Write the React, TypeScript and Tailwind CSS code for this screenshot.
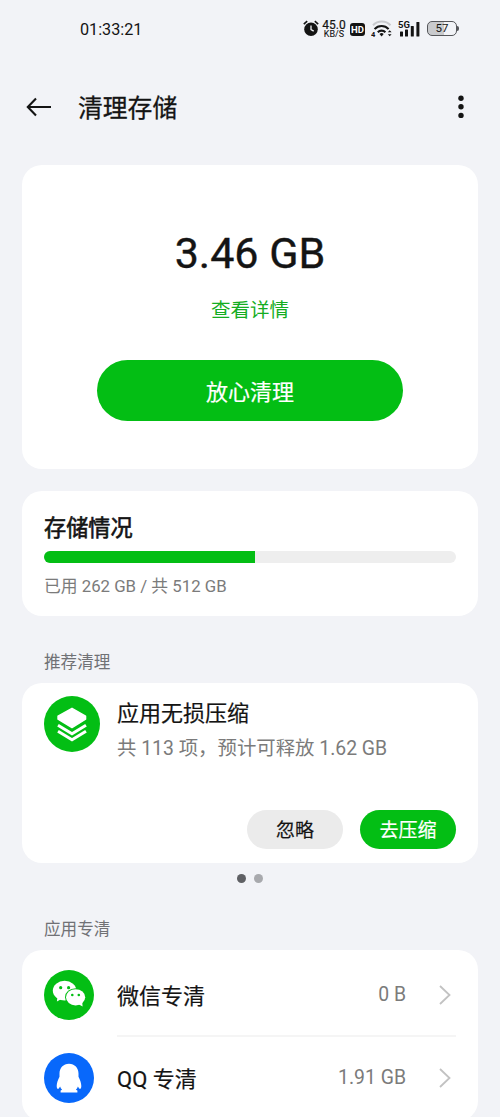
import type { ReactNode } from 'react';

const apps = [
  { id: 'wechat', name: '微信专清', size: '0 B', icon: <WechatIcon /> },
  { id: 'qq', name: 'QQ 专清', size: '1.91 GB', icon: <QQIcon /> },
];

const storage = { used: 262, total: 512 };

export default function App() {
  return (
    <div className="flex h-[1117px] w-[500px] flex-col overflow-hidden bg-[#f2f3f7] font-['Roboto','Noto_Sans_CJK_SC',sans-serif] text-[#141414]">
      <StatusBar />
      <header className="flex h-[111px] shrink-0 items-center pr-[36px] pb-[5px] pl-[26px]">
        <svg width="26" height="20" viewBox="0 0 26 20" fill="none" stroke="currentColor" strokeWidth="2.1">
          <path d="M10 1.5 1.8 10l8.2 8.5M1.8 10H25" />
        </svg>
        <h1 className="ml-[26px] pt-[4px] text-[24.8px] leading-9 [-webkit-text-stroke:0.3px]">清理存储</h1>
        <svg className="ml-auto" width="6" height="24" viewBox="0 0 6 24" fill="currentColor">
          <circle cx="3" cy="3.2" r="2.7" />
          <circle cx="3" cy="11.8" r="2.7" />
          <circle cx="3" cy="20.4" r="2.7" />
        </svg>
      </header>

      <main className="flex flex-col px-[22px]">
        <section className="flex h-[304px] flex-col items-center rounded-[20px] bg-white pt-[63px]">
          <p className="text-[43px] leading-[50px] [-webkit-text-stroke:0.4px]">3.46 GB</p>
          <a className="mt-[19px] text-[19.5px] leading-7 text-[#14ad22]">查看详情</a>
          <button className="mt-[35px] h-[61px] w-[306px] rounded-full bg-[#03be14] pt-[3px] text-[22px] text-white [-webkit-text-stroke:0.2px]">
            放心清理
          </button>
        </section>

        <section className="mt-[22px] h-[125px] rounded-[20px] bg-white px-[22px] pt-[21px]">
          <h2 className="text-[22.2px] leading-8 [-webkit-text-stroke:0.6px]">存储情况</h2>
          <div className="mt-[7px] h-[12px] overflow-hidden rounded-full bg-[#eeeeee]">
            <div className="h-full bg-[#03be14]" style={{ width: `${(storage.used / storage.total) * 100}%` }} />
          </div>
          <p className="mt-[11px] text-[16.8px] leading-6 text-[#7b7b7b]">
            已用 {storage.used} GB / 共 {storage.total} GB
          </p>
        </section>

        <SectionTitle>推荐清理</SectionTitle>
        <section className="flex h-[180px] flex-col rounded-[20px] bg-white px-[22px] pt-[13px] pb-[14px]">
          <div className="flex">
            <LayersIcon />
            <div className="ml-[17px]">
              <h3 className="pt-px text-[22px] leading-[34px] [-webkit-text-stroke:0.2px]">应用无损压缩</h3>
              <p className="mt-[3px] text-[19.4px] leading-[30px] whitespace-nowrap text-[#7b7b7b]">
                共 113 项，预计可释放 1.62 GB
              </p>
            </div>
          </div>
          <div className="mt-auto flex justify-end gap-[17px]">
            <button className="h-[39px] w-[96px] rounded-full bg-[#ebebeb] pt-[4px] text-[19px] [-webkit-text-stroke:0.2px]">忽略</button>
            <button className="h-[39px] w-[96px] rounded-full bg-[#03be14] pt-[4px] text-[19px] text-white [-webkit-text-stroke:0.2px]">
              去压缩
            </button>
          </div>
        </section>
        <div className="mt-[11px] flex justify-center gap-[8px]">
          <span className="size-[9px] rounded-full bg-[#5f6064]" />
          <span className="size-[9px] rounded-full bg-[#a8a9ad]" />
        </div>

        <SectionTitle>应用专清</SectionTitle>
        <section className="h-[171px] rounded-[20px] bg-white px-[22px] pt-[2px]">
          {apps.map((app, i) => (
            <div key={app.id} className={i === 0 ? 'flex h-[85px] items-center' : 'flex h-[81px] items-center'}>
              {app.icon}
              <div
                className={
                  i === 0
                    ? 'ml-[23px] flex h-full flex-1 items-center border-b-2 border-[#f5f5f5] pt-[2px]'
                    : 'ml-[23px] flex h-full flex-1 items-center'
                }
              >
                <span className="pt-[3px] text-[22px] [-webkit-text-stroke:0.2px]">{app.name}</span>
                <span className="ml-auto pt-px text-[19.4px] text-[#7b7b7b]">{app.size}</span>
                <svg className="mr-[5px] ml-[33px]" width="12" height="20" viewBox="0 0 12 20" fill="none" stroke="#c2c2c2" strokeWidth="1.8">
                  <path d="m1 1 9.5 9L1 19" />
                </svg>
              </div>
            </div>
          ))}
        </section>
      </main>
    </div>
  );
}

function SectionTitle({ children }: { children: ReactNode }) {
  return <h4 className="pt-[35px] pb-[8px] pl-[22px] text-[16.6px] leading-6 text-[#707175]">{children}</h4>;
}

function StatusBar() {
  return (
    <div className="flex h-[54px] shrink-0 items-center pt-[4px] pr-[41px] pl-[80px]">
      <span className="pt-[2px] text-[16.2px]">01:33:21</span>
      <div className="ml-auto flex items-center">
        {/* alarm */}
        <svg className="-mt-px" width="16" height="17" viewBox="0 0 16 17">
          <circle cx="8" cy="9.3" r="6.8" fill="#141414" />
          <path d="M.8 4.2 4.2 1.2M15.2 4.2l-3.4-3" stroke="#141414" strokeWidth="1.6" />
          <path d="M8 5.6v4l2.7 1.5" stroke="#f2f3f7" strokeWidth="1.3" fill="none" />
        </svg>
        <div className="ml-[3px] flex w-[24px] flex-col items-center">
          <span className="text-[12px] leading-[10px] [-webkit-text-stroke:0.2px]">45.0</span>
          <span className="text-[9px] leading-[8px] [-webkit-text-stroke:0.1px]">KB/S</span>
        </div>
        <span className="ml-[4px] flex h-[13px] w-[15px] items-center justify-center rounded-[3px] bg-[#141414] pt-px text-[9.5px] leading-none font-bold text-white">
          HD
        </span>
        {/* wifi with generation mark and traffic arrows */}
        <svg className="ml-[6px]" width="22" height="18" viewBox="0 0 22 18" fill="none">
          <path d="M2 5.2a12 12 0 0 1 17.5 0" stroke="#c8c9cd" strokeWidth="2" />
          <path d="M3.6 9.1a9.5 9.5 0 0 1 14 0M6.8 12.2a5.3 5.3 0 0 1 7.6 0" stroke="#141414" strokeWidth="2.1" />
          <path d="m10.6 16.5-2.1-2.400a3 3 0 0 1 4.200 0z" fill="#141414" />
          <text x="0" y="16.500" fontSize="7.5" fontWeight="700" fill="#141414">4</text>
          <path d="m16.8 12.3 1.900-2 1.900 2zM16.800 14.200l1.900 2 1.900-2z" fill="#141414" />
        </svg>
        {/* signal */}
        <svg className="ml-[5px]" width="23" height="18" viewBox="0 0 23 18" fill="#141414">
          <text x="0" y="7.800" fontSize="9.500" fontWeight="700">5G</text>
          <rect x="2" y="11.5" width="3" height="5" rx=".6" />
          <rect x="7" y="9.5" width="3" height="7" rx=".6" />
          <rect x="12.800" y="6" width="3" height="10.5" rx=".6" />
          <rect x="18.400" y="2" width="3" height="14.5" rx=".6" />
        </svg>
        <div className="-mt-px ml-[6px] flex items-center">
          <div className="flex h-[15px] w-[30px] items-center justify-center rounded-[5px] border-[1.5px] border-[#55565a] bg-linear-to-r from-[#c9cacd] from-57% to-[#f2f3f7] to-57% pt-px text-[11.5px] leading-none">
            57
          </div>
          <span className="h-[5px] w-[2px] rounded-r-full bg-[#55565a]" />
        </div>
      </div>
    </div>
  );
}

function LayersIcon() {
  return (
    <svg className="shrink-0" width="56" height="56" viewBox="0 0 56 56">
      <circle cx="28" cy="28" r="28" fill="#03be14" />
      <path d="M28 12.3 41.6 20.2v3L28 31.6 14 23.2v-3z" fill="#fff" stroke="#fff" strokeWidth="1.4" strokeLinejoin="round" />
      <path d="M14 29.3 28 37.8l14-8.5M14 35.2l14 8.5 14-8.5" fill="none" stroke="#fff" strokeWidth="3" />
    </svg>
  );
}

function WechatIcon() {
  return (
    <svg className="shrink-0" width="50" height="50" viewBox="0 0 50 50">
      <circle cx="25" cy="25" r="25" fill="#03be14" />
      <ellipse cx="20.6" cy="20.6" rx="11.8" ry="9.8" fill="#fff" />
      <path d="m13.5 26.5-.6 5 5.500-3z" fill="#fff" />
      <ellipse cx="31.6" cy="27.3" rx="10.6" ry="9.1" fill="#03be14" />
      <ellipse cx="31.6" cy="27.3" rx="9.6" ry="8.1" fill="#fff" />
      <path d="m38.2 32 .4 4.4-5-2.6z" fill="#fff" />
      <g fill="#03be14">
        <circle cx="16.7" cy="17.7" r="1.6" />
        <circle cx="24.6" cy="17.7" r="1.6" />
        <circle cx="28.3" cy="25" r="1.3" />
        <circle cx="34.8" cy="25" r="1.3" />
      </g>
    </svg>
  );
}

function QQIcon() {
  return (
    <svg className="shrink-0" width="50" height="50" viewBox="0 0 50 50">
      <circle cx="25" cy="25" r="25" fill="#0868fb" />
      <path
        d="M25 10.8c-5.7 0-9.5 4.4-9.5 9.7v3.2c-1.4 2.7-2.9 6.3-2.8 9.4 0 1.8.5 2.8 1.1 2.8.8 0 1.7-1.4 2.3-2.5.3 1.2 1 2.4 2 3.4l-1.500.6v2.200h16.800v-2.200l-1.500-.6c1-1 1.700-2.200 2-3.400.6 1.100 1.500 2.500 2.300 2.500.6 0 1.100-1 1.100-2.800.1-3.100-1.400-6.700-2.800-9.400v-3.200c0-5.300-3.800-9.700-9.500-9.700z"
        fill="#fff"
      />
    </svg>
  );
}
